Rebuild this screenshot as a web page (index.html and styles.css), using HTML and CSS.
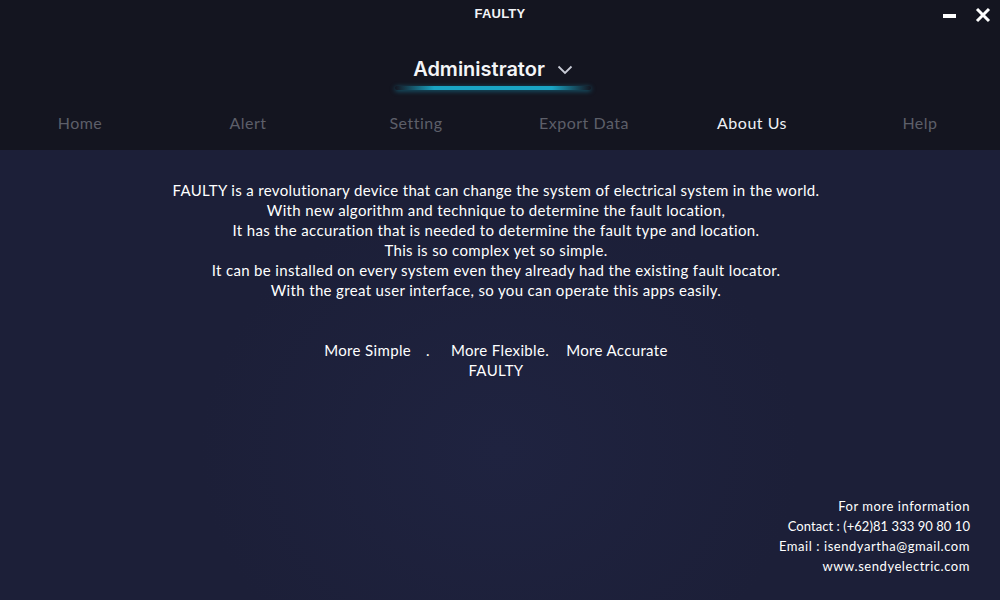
FILE: index.html
```html
<!DOCTYPE html>
<html lang="en">
<head>
<meta charset="utf-8">
<title>FAULTY</title>
<link rel="stylesheet" href="styles.css">
</head>
<body>
<div class="app">
  <header class="header">
    <div class="titlebar">
      <div class="app-title">FAULTY</div>
      <div class="win-buttons">
        <svg class="win-btn" width="14" height="14" viewBox="0 0 14 14"><rect x="0" y="6" width="13" height="4" fill="#ffffff"/></svg>
        <svg class="win-btn" width="16" height="16" viewBox="0 0 16 16"><path d="M2 2 L14 14 M14 2 L2 14" stroke="#ffffff" stroke-width="3" fill="none"/></svg>
      </div>
    </div>
    <div class="user">
      <div class="user-name">Administrator
        <svg class="chev" width="16" height="10" viewBox="0 0 16 10"><path d="M1.5 1.5 L8 8 L14.5 1.5" stroke="#c9ccd6" stroke-width="1.8" fill="none"/></svg>
      </div>
      <div class="user-glow"></div>
    </div>
    <nav class="tabs">
      <div class="tab">Home</div>
      <div class="tab">Alert</div>
      <div class="tab">Setting</div>
      <div class="tab">Export Data</div>
      <div class="tab active">About Us</div>
      <div class="tab">Help</div>
    </nav>
  </header>
  <main class="content">
    <div class="about">
      <p>FAULTY is a revolutionary device that can change the system of electrical system in the world.</p>
      <p>With new algorithm and technique to determine the fault location,</p>
      <p>It has the accuration that is needed to determine the fault type and location.</p>
      <p>This is so complex yet so simple.</p>
      <p>It can be installed on every system even they already had the existing fault locator.</p>
      <p>With the great user interface, so you can operate this apps easily.</p>
    </div>
    <div class="tagline">
      <p class="slogans"><span>More Simple</span><span class="dot">.</span><span class="s2">More Flexible.</span><span class="s3">More Accurate</span></p>
      <p>FAULTY</p>
    </div>
    <div class="contact">
      <p>For more information</p>
      <p class="phone">Contact : (+62)81 333 90 80 10</p>
      <p>Email : isendyartha@gmail.com</p>
      <p>www.sendyelectric.com</p>
    </div>
  </main>
</div>
</body>
</html>
```
FILE: styles.css
```css
* { box-sizing: border-box; }
html, body { margin: 0; padding: 0; }
body {
  width: 1000px;
  height: 600px;
  overflow: hidden;
  font-family: "Lato", "Open Sans", sans-serif;
  color: #ffffff;
  background: #1c1f38;
}
.app {
  display: flex;
  flex-direction: column;
  height: 600px;
}
.header {
  background: #141520;
  display: flex;
  flex-direction: column;
}
.titlebar {
  height: 30px;
  display: flex;
  justify-content: center;
  align-items: flex-start;
  position: relative;
}
.app-title {
  font-family: "Liberation Sans", "Inter", sans-serif;
  font-weight: 700;
  font-size: 13px;
  letter-spacing: 0.2px;
  padding-top: 6px;
  color: #f2f3f7;
}
.win-buttons {
  position: absolute;
  right: 9px;
  top: 7px;
  display: flex;
  gap: 18px;
  align-items: center;
}
.user {
  height: 70px;
  display: flex;
  flex-direction: column;
  align-items: center;
  padding-top: 27px;
  padding-right: 14px;
}
.user-name {
  font-family: "Inter", "Lato", sans-serif;
  font-weight: 600;
  font-size: 20px;
  color: #f4f5f8;
  display: flex;
  align-items: center;
  gap: 12px;
}
.chev { margin-top: 2px; }
.user-glow {
  margin-top: 5px;
  width: 196px;
  height: 4px;
  border-radius: 2px;
  background: linear-gradient(90deg, rgba(26,150,185,0) 0%, #1aa4c4 20%, #1aa4c4 80%, rgba(26,150,185,0) 100%);
  box-shadow: 0 1px 5px rgba(26,164,196,0.55);
}
.tabs {
  height: 50px;
  display: grid;
  grid-template-columns: repeat(6, 168px);
  margin-left: -4px;
}
.tab {
  position: relative;
  display: flex;
  justify-content: center;
  align-items: center;
  padding-bottom: 6px;
  font-size: 16px;
  letter-spacing: 0.5px;
  color: #5d5f69;
}
.tab.active { color: #eef0f5; }
.tab.active::after {
  content: "";
  position: absolute;
  left: 9px;
  top: 50px;
  width: 166px;
  height: 4px;
  background: linear-gradient(90deg, #35b99c, #2a6eaa);
}
.content {
  flex: 1;
  position: relative;
  padding: 0 30px 24px 0;
  display: flex;
  flex-direction: column;
  background: radial-gradient(ellipse 300px 260px at 500px 300px, #1f2340 0%, #1c1f38 100%);
}
.content p { margin: 0; line-height: 20px; }
.about {
  margin-top: 30px;
  text-align: center;
  font-size: 15px;
  letter-spacing: 0.35px;
  padding-left: 22px;
}
.tagline {
  margin-top: 40px;
  text-align: center;
  font-size: 15px;
  letter-spacing: 0.35px;
  padding-left: 22px;
}
.slogans .dot { margin-left: 15px; }
.slogans .s2 { margin-left: 21px; }
.slogans .s3 { margin-left: 17px; }
.contact {
  margin-top: auto;
  text-align: right;
  font-size: 13px;
  letter-spacing: 0.55px;
}
.contact .phone { letter-spacing: 0.05px; }
```
